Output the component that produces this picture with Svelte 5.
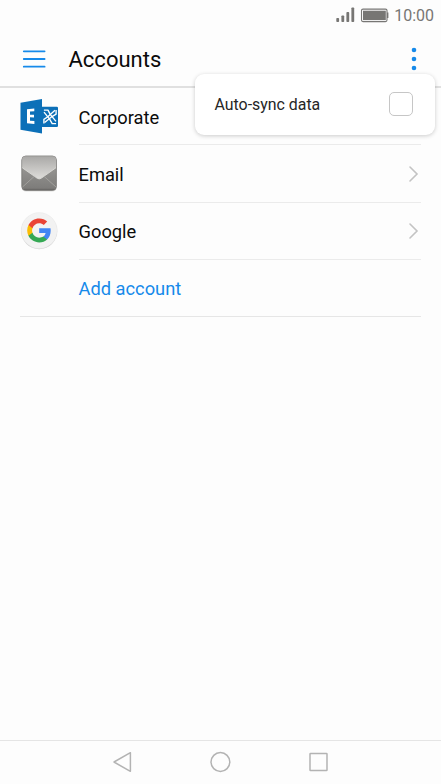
<script>
  const accounts = [
    { name: 'Corporate', icon: 'exchange' },
    { name: 'Email', icon: 'mail' },
    { name: 'Google', icon: 'google' },
  ];
  let autoSync = $state(false);
</script>

<div class="screen">
  <div class="status">
    <svg width="52" height="20" viewBox="0 0 52 20">
      <g fill="#777674">
        <rect x="0.3" y="12" width="2.8" height="4" rx="0.8" />
        <rect x="5.4" y="9.5" width="2.8" height="6.5" rx="0.8" />
        <rect x="10.4" y="6" width="2.8" height="10" rx="0.8" />
        <rect x="15.4" y="1.5" width="2.8" height="14.5" rx="0.8" />
        <rect x="27" y="4.7" width="22.8" height="9.4" />
        <rect x="51" y="6.5" width="1.4" height="5.5" />
      </g>
      <rect x="25.5" y="3.1" width="25.5" height="12.5" rx="1.5" fill="none" stroke="#777674" stroke-width="1.1" />
    </svg>
    <span class="clock">10:00</span>
  </div>

  <header>
    <svg class="burger" width="24" height="20" viewBox="0 0 24 20">
      <path d="M1.8 2.3H22.6M1.8 10H22.6M1.8 17.7H22.6" stroke="#168aea" stroke-width="1.8" stroke-linecap="round" />
    </svg>
    <h1>Accounts</h1>
    <svg class="more" width="6" height="24" viewBox="0 0 6 24">
      <g fill="#168aea"><circle cx="3" cy="3" r="2.3" /><circle cx="3" cy="12" r="2.3" /><circle cx="3" cy="21" r="2.3" /></g>
    </svg>
  </header>

  <main>
    {#each accounts as account}
      <div class="row">
        <div class="icon">
          {#if account.icon === 'exchange'}
            <svg width="40" height="40" viewBox="0 0 40 40">
              <rect x="20" y="9.7" width="18" height="20.2" rx="1.2" fill="#0c70b8" />
              <g fill="none" stroke="#fff" stroke-width="1.35" stroke-linejoin="round">
                <path d="M23.9 13.1H28L30.2 17.4L36 24.4" />
                <path d="M36.1 13V17.2L32 19.6L24.6 25.6" />
                <path d="M36.1 26.6H32.2L29.6 22.2L24 15.2" />
                <path d="M23.9 26.6V22.4L27.8 19.8L35 13.2" />
              </g>
              <path d="M0.5 5.8L22 2.1V36.6L0.5 32.7Z" fill="#0c70b8" />
              <path d="M7 12.2L14.3 11.6V14.3L10 14.6V17.8L14 17.7V20.4L10 20.3V23.8L14.4 24.1V26.9L7 26.3Z" fill="#fff" />
            </svg>
          {:else if account.icon === 'mail'}
            <svg width="40" height="40" viewBox="0 0 40 40">
              <defs>
                <linearGradient id="shell" x1="0" y1="0" x2="0" y2="1">
                  <stop offset="0" stop-color="#aaa9a5" /><stop offset="0.2" stop-color="#9b9a97" /><stop offset="1" stop-color="#7b7a78" />
                </linearGradient>
                <linearGradient id="flap" x1="0" y1="0" x2="0" y2="1">
                  <stop offset="0" stop-color="#aaa9a7" /><stop offset="1" stop-color="#deddda" />
                </linearGradient>
              </defs>
              <rect x="1.4" y="1.8" width="35.4" height="35.7" rx="4.6" fill="#dededc" />
              <rect x="1.8" y="2" width="34.6" height="34.4" rx="4" fill="url(#shell)" stroke="#747371" stroke-width="0.7" />
              <path d="M3 2.6H35.2L36 5V13.5L21.3 24Q19.2 25.4 17.1 24L2.2 13.5V5Z" fill="url(#flap)" />
              <path d="M2.2 13.7L17.1 24.2Q19.2 25.6 21.3 24.2L36 13.7" fill="none" stroke="#e5e4e1" stroke-width="0.8" />
              <path d="M2.5 33L14.3 22.3M36 33L24 22.3" stroke="#a9a8a5" stroke-width="0.8" />
              <path d="M4 35.3H34.4" stroke="#686765" stroke-width="1" />
            </svg>
          {:else}
            <svg width="40" height="40" viewBox="0 0 40 40">
              <circle cx="19.2" cy="20.2" r="18" fill="#cfcfcf" />
              <circle cx="19.2" cy="19.6" r="18" fill="#f2f2f2" stroke="#e5e5e5" stroke-width="0.4" />
              <g transform="translate(6.1 6.4) scale(1.09)">
                <path fill="#4285f4" d="M22.56 12.25c0-.78-.07-1.53-.2-2.25H12v4.26h5.92c-.26 1.37-1.04 2.53-2.21 3.31v2.77h3.57c2.08-1.92 3.28-4.74 3.28-8.09z" />
                <path fill="#34a853" d="M12 23c2.97 0 5.46-.98 7.28-2.66l-3.57-2.77c-.98.66-2.23 1.06-3.71 1.06-2.86 0-5.29-1.93-6.16-4.53H2.18v2.84C3.99 20.53 7.7 23 12 23z" />
                <path fill="#fbbc05" d="M5.84 14.09c-.22-.66-.35-1.36-.35-2.09s.13-1.43.35-2.09V7.07H2.18C1.43 8.55 1 10.22 1 12s.43 3.45 1.18 4.93l3.66-2.84z" />
                <path fill="#ea4335" d="M12 5.38c1.62 0 3.06.56 4.21 1.64l3.15-3.15C17.45 2.09 14.97 1 12 1 7.7 1 3.99 3.47 2.18 7.07l3.66 2.84c.87-2.6 3.3-4.53 6.16-4.53z" />
              </g>
            </svg>
          {/if}
        </div>
        <div class="body">
          <span>{account.name}</span>
          <svg width="12" height="18" viewBox="0 0 12 18">
            <path d="M2 2L9 9L2 16" fill="none" stroke="#c3c3c3" stroke-width="1.6" stroke-linecap="round" />
          </svg>
        </div>
      </div>
    {/each}
    <div class="row add"><span>Add account</span></div>
  </main>

  <nav>
    <svg width="22" height="22" viewBox="-0.4 0 22 22"><path d="M2.6 11L19 1.7V20.3Z" /></svg>
    <svg width="22" height="22" viewBox="-0.4 0 22 22"><circle cx="11" cy="11" r="9.4" /></svg>
    <svg width="22" height="22" viewBox="-0.4 0 22 22"><rect x="2.6" y="2.5" width="17" height="17" rx="0.6" /></svg>
  </nav>

  <label class="menu">
    <span>Auto-sync data</span>
    <input type="checkbox" bind:checked={autoSync} />
  </label>
</div>

<style>
  .screen {
    position: relative;
    display: flex;
    flex-direction: column;
    box-sizing: border-box;
    width: 441px;
    height: 784px;
    overflow: hidden;
    background: #fdfdfd;
    color: #0b0b0b;
    font-family: Roboto, sans-serif;
  }
  svg { display: block; flex: none; overflow: visible; }
  .status {
    display: flex;
    justify-content: flex-end;
    align-items: center;
    height: 30px;
    padding: 1px 7px 0 0;
    box-sizing: border-box;
  }
  .status svg { margin: 0 6px 0 0; }
  .clock { font-size: 16px; line-height: 20px; color: #777674; }
  header {
    display: flex;
    align-items: center;
    box-sizing: border-box;
    height: 58px;
    padding: 0 24px 0 22px;
    border-bottom: 2px solid #e0e0e0;
  }
  .burger { margin-top: 2px; }
  .more { margin-top: 2px; }
  h1 {
    flex: 1;
    margin: 4px 0 0 22.5px;
    font-size: 22px;
    font-weight: 400;
    line-height: 28px;
  }
  main { flex: 1; padding-top: 0.2px; }
  .row {
    display: flex;
    height: 57.2px;
    padding: 0 20px;
  }
  .icon { display: flex; align-items: center; width: 58.5px; padding-top: 0.6px; box-sizing: border-box; }
  .body {
    display: flex;
    flex: 1;
    align-items: center;
    justify-content: space-between;
    padding-right: 1px;
    border-bottom: 1px solid #ebebeb;
    font-size: 18.3px;
    line-height: 24px;
  }
  .body span { padding-top: 2.6px; }
  .body svg { margin-top: 0.6px; }
  .add span { padding-top: 1px; }
  .add {
    align-items: center;
    box-sizing: border-box;
    margin: 0 20px;
    padding: 0 0 0 58.5px;
    border-bottom: 1px solid #e6e6e6;
    color: #168aea;
    font-size: 18.3px;
  }
  nav {
    display: flex;
    justify-content: center;
    align-items: center;
    gap: 76px;
    box-sizing: border-box;
    height: 44px;
    padding: 0 1px 1.4px 0;
    border-top: 1px solid #e5e5e5;
  }
  nav svg { fill: none; stroke: #b3b3b3; stroke-width: 1.5; stroke-linejoin: round; }
  .menu {
    position: absolute;
    top: 74px;
    left: 195px;
    display: flex;
    align-items: center;
    justify-content: space-between;
    box-sizing: border-box;
    width: 240px;
    height: 61px;
    padding: 0 22.5px 1px 19.5px;
    border-radius: 9px;
    background: #fff;
    box-shadow: 0 1px 4px rgba(0, 0, 0, 0.2);
    color: #262626;
    font-size: 15.9px;
  }
  .menu span { padding-top: 1px; }
  .menu input {
    appearance: none;
    box-sizing: border-box;
    width: 23.5px;
    height: 24px;
    margin: 0;
    border: 1px solid #c6c6c6;
    border-radius: 5px;
    background: #fff;
  }
</style>
